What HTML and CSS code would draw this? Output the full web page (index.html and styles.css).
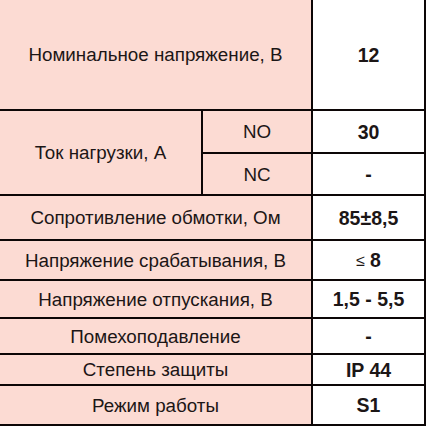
FILE: index.html
```html
<!DOCTYPE html>
<html lang="ru">
<head>
<meta charset="utf-8">
<link rel="stylesheet" href="styles.css">
</head>
<body>
<div class="spec">
  <div class="cell label wide">Номинальное напряжение, В</div>
  <div class="cell value">12</div>

  <div class="cell label tall">Ток нагрузки, А</div>
  <div class="cell label">NO</div>
  <div class="cell value">30</div>
  <div class="cell label">NC</div>
  <div class="cell value">-</div>

  <div class="cell label wide">Сопротивление обмотки, Ом</div>
  <div class="cell value">85±8,5</div>

  <div class="cell label wide">Напряжение срабатывания, В</div>
  <div class="cell value"><span class="le">≤</span><span>8</span></div>

  <div class="cell label wide">Напряжение отпускания, В</div>
  <div class="cell value">1,5 - 5,5</div>

  <div class="cell label wide">Помехоподавление</div>
  <div class="cell value">-</div>

  <div class="cell label wide">Степень защиты</div>
  <div class="cell value">IP 44</div>

  <div class="cell label wide">Режим работы</div>
  <div class="cell value">S1</div>
</div>
</body>
</html>
```

FILE: styles.css
```css
html, body {
  margin: 0;
  padding: 0;
  background: #ffffff;
}

body {
  font-family: "Liberation Sans", Arial, sans-serif;
  color: #1c1616;
}

.spec {
  display: grid;
  grid-template-columns: 201px 108px 111px;
  grid-template-rows: 109px 41px 40px 43px 38px 36px 34px 29px 38px;
  gap: 2px;
  width: 424px;
  padding: 0 2px 2px 0;
  background: #0c0606;
}

.cell {
  display: flex;
  align-items: center;
  justify-content: center;
  text-align: center;
  padding-top: 1px;
}

.label {
  background: #fcdbd3;
  font-size: 18.8px;
}

.value {
  background: #ffffff;
  font-size: 19.5px;
  font-weight: bold;
}

.wide {
  grid-column: span 2;
}

.tall {
  grid-row: span 2;
}

.le {
  font-weight: normal;
  font-size: 16px;
  margin-right: 5px;
}
```
